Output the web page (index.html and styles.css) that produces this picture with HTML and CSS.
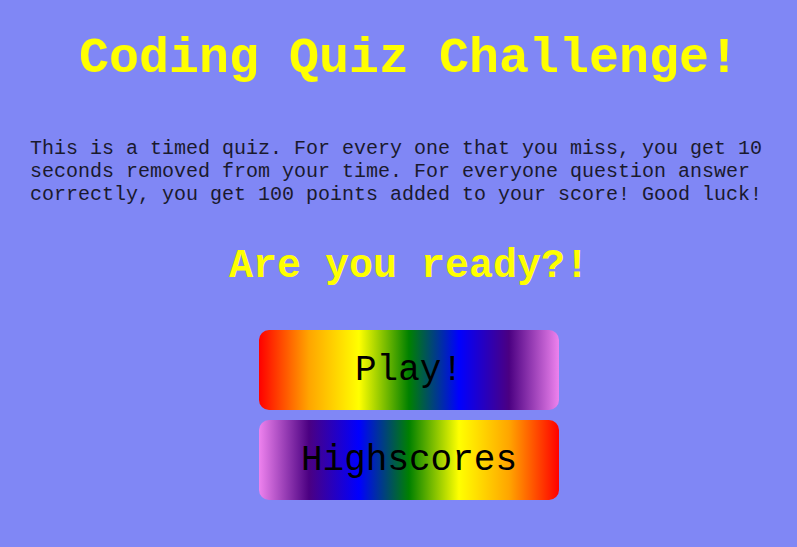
FILE: index.html
```html
<!DOCTYPE html>
<html lang="en">
<head>
<meta charset="utf-8">
<title>Coding Quiz Challenge</title>
<link rel="stylesheet" href="styles.css">
</head>
<body>
<main class="page">
  <h1 class="title">Coding Quiz Challenge!</h1>
  <p class="intro">This is a timed quiz. For every one that you miss, you get 10 seconds removed from your time. For everyone question answer correctly, you get 100 points added to your score! Good luck!</p>
  <h2 class="ready">Are you ready?!</h2>
  <div class="actions">
    <button class="btn btn-play">Play!</button>
    <button class="btn btn-scores">Highscores</button>
  </div>
</main>
</body>
</html>
```
FILE: styles.css
```css
html, body {
  margin: 0;
  padding: 0;
}
body {
  background: #8087f5;
  font-family: "Courier New", "Nimbus Mono PS", "Nimbus Mono L", "FreeMono", "Courier", "Liberation Mono", monospace;
  color: #000;
  min-height: 547px;
}
.page {
  padding: 30px 9px 0 30px;
  display: flex;
  flex-direction: column;
  align-items: center;
  text-align: center;
}
.title {
  margin: 0;
  font-size: 50px;
  line-height: 57px;
  font-weight: bold;
  color: #ffff00;
}
.intro {
  margin: 50px 0 0 0;
  align-self: stretch;
  text-align: left;
  font-size: 20px;
  line-height: 23px;
  color: #1a1a2e;
}
.ready {
  margin: 38px 0 0 0;
  font-size: 40px;
  line-height: 45px;
  font-weight: bold;
  color: #ffff00;
}
.actions {
  margin-top: 41px;
  display: flex;
  flex-direction: column;
  gap: 10px;
}
.btn {
  width: 300px;
  height: 80px;
  border: none;
  border-radius: 10px;
  padding: 0;
  font-family: inherit;
  font-size: 36px;
  color: #000;
  cursor: pointer;
}
.btn-play {
  background: linear-gradient(to right, red, orange, yellow, green, blue, indigo, violet);
}
.btn-scores {
  background: linear-gradient(to left, red, orange, yellow, green, blue, indigo, violet);
}
```
